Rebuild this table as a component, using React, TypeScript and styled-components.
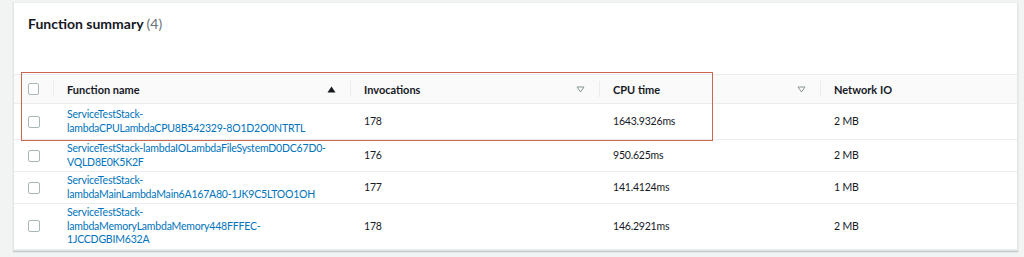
import React from "react";
import styled, { createGlobalStyle } from "styled-components";

const GlobalStyle = createGlobalStyle`
  html, body {
    margin: 0;
    padding: 0;
    background: #f2f3f3;
    font-family: Lato, "Open Sans", "Liberation Sans", Arial, sans-serif;
    color: #16191f;
  }
`;

const Page = styled.div`
  padding: 2px 6px 6px 13px;
  height: 257px;
  box-sizing: border-box;
`;

const Card = styled.div`
  position: relative;
  background: #fff;
  border: 1px solid #e3e6e6;
  border-top-color: #eaeded;
  box-shadow: 0 1px 1px rgba(0, 28, 36, 0.2);
`;

const Header = styled.div`
  padding: 11px 14px 0;
  height: 72px;
  box-sizing: border-box;
  border-bottom: 1px solid #eaeded;
`;

const Title = styled.h2`
  margin: 0;
  font-size: 14px;
  font-weight: 700;
  line-height: 20px;
`;

const Count = styled.span`
  font-weight: 400;
  color: #687078;
`;

const Table = styled.div`
  display: grid;
  grid-template-columns: 39px 297px 249px 221px 1fr;
`;

const HeadCell = styled.div`
  display: flex;
  align-items: center;
  justify-content: space-between;
  height: 29px;
  padding: 0 14px;
  box-sizing: border-box;
  background: #fafafa;
  border-bottom: 1px solid #eaeded;
  font-size: 11px;
  font-weight: 700;
  color: #16191f;
  position: relative;

  &:not(:first-child)::before {
    content: "";
    position: absolute;
    left: 0;
    top: 6px;
    bottom: 6px;
    width: 1px;
    background: #eaeded;
  }
`;

const CheckCell = styled.div<{ $tall?: boolean }>`
  display: flex;
  align-items: center;
  padding-left: 14px;
  box-sizing: border-box;
  border-bottom: 1px solid #eaeded;
  min-height: ${(p) => (p.$tall ? "36px" : "32px")};
`;

const Cell = styled.div<{ $tall?: boolean }>`
  display: flex;
  align-items: center;
  padding: 2px 14px;
  box-sizing: border-box;
  border-bottom: 1px solid #eaeded;
  min-height: ${(p) => (p.$tall ? "36px" : "32px")};
  font-size: 10.5px;
  letter-spacing: -0.2px;
  line-height: 13.5px;
`;

const Link = styled.a`
  color: #0073bb;
  text-decoration: none;
  white-space: nowrap;
`;

const Box = styled.span`
  display: inline-block;
  width: 10px;
  height: 10px;
  border: 1px solid #aab7b8;
  border-radius: 2px;
  background: #fff;
`;

const Highlight = styled.div`
  position: absolute;
  left: 7px;
  top: 69px;
  width: 690px;
  height: 67px;
  border: 1px solid #c7684f;
  pointer-events: none;
`;

const SortIcon = ({ active }: { active?: boolean }) =>
  active ? (
    <svg width="9" height="7" viewBox="0 0 9 7">
      <path d="M4.5 0.5 L8.5 6.5 H0.5 Z" fill="#16191f" />
    </svg>
  ) : (
    <svg width="9" height="7" viewBox="0 0 9 7">
      <path d="M1 1 H8 L4.5 6 Z" fill="none" stroke="#879596" strokeWidth="1" />
    </svg>
  );

const rows = [
  { name: ["ServiceTestStack-", "lambdaCPULambdaCPU8B542329-8O1D2O0NTRTL"], inv: "178", cpu: "1643.9326ms", net: "2 MB" },
  { name: ["ServiceTestStack-lambdaIOLambdaFileSystemD0DC67D0-", "VQLD8E0K5K2F"], inv: "176", cpu: "950.625ms", net: "2 MB" },
  { name: ["ServiceTestStack-", "lambdaMainLambdaMain6A167A80-1JK9C5LTOO1OH"], inv: "177", cpu: "141.4124ms", net: "1 MB" },
  { name: ["ServiceTestStack-", "lambdaMemoryLambdaMemory448FFFEC-", "1JCCDGBIM632A"], inv: "178", cpu: "146.2921ms", net: "2 MB" },
];

export default function App() {
  return (
    <Page>
      <GlobalStyle />
      <Card>
        <Header>
          <Title>
            Function summary <Count>(4)</Count>
          </Title>
        </Header>
        <Table>
          <HeadCell>
            <Box />
          </HeadCell>
          <HeadCell>
            Function name <SortIcon active />
          </HeadCell>
          <HeadCell>
            Invocations <SortIcon />
          </HeadCell>
          <HeadCell>
            CPU time <SortIcon />
          </HeadCell>
          <HeadCell>Network IO</HeadCell>
          {rows.map((r, i) => (
            <React.Fragment key={i}>
              <CheckCell $tall={i === 0}>
                <Box />
              </CheckCell>
              <Cell $tall={i === 0}>
                <Link href="#">
                  {r.name.map((part, j) => (
                    <React.Fragment key={j}>
                      {part}
                      {j < r.name.length - 1 && <br />}
                    </React.Fragment>
                  ))}
                </Link>
              </Cell>
              <Cell $tall={i === 0}>{r.inv}</Cell>
              <Cell $tall={i === 0}>{r.cpu}</Cell>
              <Cell $tall={i === 0}>{r.net}</Cell>
            </React.Fragment>
          ))}
        </Table>
        <Highlight />
      </Card>
    </Page>
  );
}
